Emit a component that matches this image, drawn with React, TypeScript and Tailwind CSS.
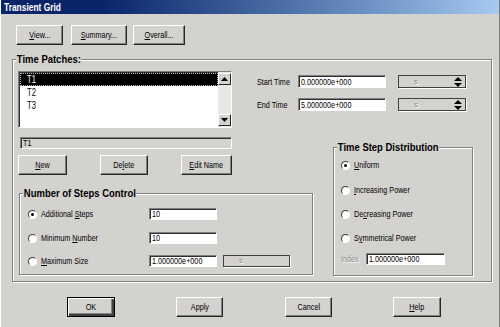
import React from 'react';

const BG = 'bg-[#d3d2cf]';

// the dialog's font is much narrower than Arial, so text is squeezed sideways
function Tx({ children, center = false, className = '' }: { children: React.ReactNode; center?: boolean; className?: string }) {
  return (
    <span
      className={`inline-block whitespace-nowrap scale-x-[0.76] ${center ? 'origin-center' : 'origin-left'} ${className}`}
    >
      {children}
    </span>
  );
}

function Btn({
  children,
  className = '',
  isDefault = false,
}: {
  children: React.ReactNode;
  className?: string;
  isDefault?: boolean;
}) {
  return (
    <div
      className={`flex h-[20px] shrink-0 items-center justify-center text-[9.5px] leading-none text-black ${
        isDefault
          ? 'border border-black shadow-[inset_1px_1px_0_#fff,inset_-2px_-2px_0_#404040,inset_-3px_-3px_0_#808080]'
          : 'border border-t-white border-l-white border-b-[#262626] border-r-[#262626] shadow-[inset_-1px_-1px_0_#808080]'
      } ${className}`}
    >
      <Tx center>{children}</Tx>
    </div>
  );
}

function Group({
  title,
  className = '',
  children,
}: {
  title: string;
  className?: string;
  children?: React.ReactNode;
}) {
  return (
    <div className={`relative border border-[#808080] shadow-[inset_1px_1px_0_#fff,1px_1px_0_#fff] ${className}`}>
      <span
        className={`absolute left-[3px] top-[-8px] origin-left scale-x-[0.86] whitespace-nowrap ${BG} px-px text-[11px] font-bold leading-[14px] text-black`}
      >
        {title}
      </span>
      {children}
    </div>
  );
}

function Field({ value, className = '', grey = false }: { value: string; className?: string; grey?: boolean }) {
  return (
    <div
      className={`flex shrink-0 items-center overflow-hidden border border-t-[#808080] border-l-[#808080] border-b-white border-r-white pl-[2px] text-[9.5px] leading-none text-black shadow-[inset_1px_1px_0_#303030] ${
        grey ? 'bg-[#d3d2cf]' : 'bg-white'
      } ${className}`}
    >
      <Tx>{value}</Tx>
    </div>
  );
}

function UnitSelect({ arrows = true, className = '' }: { arrows?: boolean; className?: string }) {
  return (
    <div className={`flex shrink-0 items-center border border-[#404040] bg-[#d3d2cf] shadow-[1px_1px_0_#fff] ${className}`}>
      <span className="ml-[15px] flex-1 text-[8px] leading-none text-[#8a8a8a] [text-shadow:1px_1px_0_#fff]">s</span>
      {arrows && (
        <svg width="8" height="10" viewBox="0 0 8 10" className="mr-[3px]">
          <polygon points="0,4 4,0 8,4" fill="#000" />
          <polygon points="0,6 4,10 8,6" fill="#000" />
        </svg>
      )}
    </div>
  );
}

function Radio({ checked = false }: { checked?: boolean }) {
  return (
    <span className="flex h-[9px] w-[9px] shrink-0 items-center justify-center rounded-full border-[1.5px] border-t-[#404040] border-l-[#404040] border-b-white border-r-white bg-white">
      {checked && <span className="h-[3px] w-[3px] rounded-full bg-black" />}
    </span>
  );
}

function RadioRow({
  checked,
  label,
  under,
  className = '',
}: {
  checked?: boolean;
  label: string;
  under: number;
  className?: string;
}) {
  return (
    <div className={`flex h-[12px] items-center ${className}`}>
      <Radio checked={checked} />
      <span className="ml-[4px] text-[9.5px] leading-none text-black">
        <Tx>
          {label.slice(0, under)}
          <u>{label[under]}</u>
          {label.slice(under + 1)}
        </Tx>
      </span>
    </div>
  );
}

export default function App() {
  return (
    <div
      className={`flex h-[327px] w-[500px] flex-col overflow-hidden border-l border-l-white border-r border-r-[#808080] ${BG} font-['Liberation_Sans',Arial,sans-serif]`}
    >
      {/* title bar */}
      <div className="flex h-[14px] shrink-0 items-center bg-gradient-to-r from-[#0a246a] from-[20%] to-[#a6caf0] pl-[3px]">
        <span className="origin-left scale-x-[0.8] whitespace-nowrap text-[10.5px] font-bold leading-none text-white">
          Transient Grid
        </span>
      </div>

      {/* top buttons */}
      <div className="mt-[11px] flex pl-[15px]">
        <Btn className="w-[47px]">
          <u>V</u>iew...
        </Btn>
        <Btn className="ml-[8px] w-[56px]">
          <u>S</u>ummary...
        </Btn>
        <Btn className="ml-[6px] w-[52px]">
          <u>O</u>verall...
        </Btn>
      </div>

      {/* time patches */}
      <Group title="Time Patches:" className="ml-[11px] mr-[7px] mt-[14px] h-[223px] shrink-0">
        <div className="flex flex-col pl-[5px] pt-[11px]">
          <div className="flex">
            <div className="flex w-[214px] flex-col">
              <div className="flex h-[57px] border border-t-[#808080] border-l-[#808080] border-b-white border-r-white bg-white shadow-[inset_1px_1px_0_#303030]">
                <div className="flex flex-1 flex-col pl-px pt-px text-[10px] leading-none">
                  <div className="flex h-[13px] items-center border border-dotted border-[#bbbbbb] bg-black pl-[6px] text-white">
                    <Tx>T1</Tx>
                  </div>
                  <div className="flex h-[13px] items-center pl-[7px] text-black">
                    <Tx>T2</Tx>
                  </div>
                  <div className="flex h-[13px] items-center pl-[7px] text-black">
                    <Tx>T3</Tx>
                  </div>
                </div>
                <div className="flex w-[13px] flex-col bg-[#e9e7e3] pt-px">
                  <div className="flex h-[12px] items-center justify-center border border-t-white border-l-white border-b-[#262626] border-r-[#262626] bg-[#d3d2cf]">
                    <svg width="7" height="4" viewBox="0 0 7 4">
                      <polygon points="0,4 3.5,0 7,4" fill="#000" />
                    </svg>
                  </div>
                  <div className="flex-1" />
                  <div className="mb-px flex h-[12px] items-center justify-center border border-t-white border-l-white border-b-[#262626] border-r-[#262626] bg-[#d3d2cf]">
                    <svg width="7" height="4" viewBox="0 0 7 4">
                      <polygon points="0,0 3.5,4 7,0" fill="#000" />
                    </svg>
                  </div>
                </div>
              </div>
              <Field value="T1" grey className="ml-[2px] mt-[9px] h-[12px] w-[212px]" />
            </div>

            <div className="ml-[25px] flex flex-col pt-[4px] text-[9.5px] leading-none text-black">
              <div className="flex h-[13px] items-center">
                <span className="w-[41px]">
                  <Tx>Start Time</Tx>
                </span>
                <Field value="0.000000e+000" className="h-[13px] w-[88px]" />
                <UnitSelect className="ml-[12px] h-[13px] w-[68px]" />
              </div>
              <div className="mt-[10px] flex h-[13px] items-center">
                <span className="w-[41px]">
                  <Tx>End Time</Tx>
                </span>
                <Field value="5.000000e+000" className="h-[13px] w-[88px]" />
                <UnitSelect className="ml-[12px] h-[13px] w-[68px]" />
              </div>
            </div>
          </div>

          <div className="flex">
            <div className="flex w-[295px] flex-col">
              <div className="mt-[6px] flex">
                <Btn className="w-[49px]">
                  <u>N</u>ew
                </Btn>
                <Btn className="ml-[33px] w-[48px]">
                  De<u>l</u>ete
                </Btn>
                <Btn className="ml-[33px] w-[51px]">
                  <u>E</u>dit Name
                </Btn>
              </div>
              <Group title="Number of Steps Control" className="ml-px mt-[18px] h-[82px] w-[294px]">
                <div className="flex flex-col pl-[8px] pt-[14px] text-[9.5px] leading-none">
                  <div className="flex h-[12px] items-center">
                    <div className="w-[121px]">
                      <RadioRow checked label="Additional Steps" under={11} />
                    </div>
                    <Field value="10" className="h-[12px] w-[68px]" />
                  </div>
                  <div className="mt-[12px] flex h-[12px] items-center">
                    <div className="w-[121px]">
                      <RadioRow label="Minimum Number" under={8} />
                    </div>
                    <Field value="10" className="h-[12px] w-[68px]" />
                  </div>
                  <div className="mt-[11px] flex h-[12px] items-center">
                    <div className="w-[121px]">
                      <RadioRow label="Maximum Size" under={0} />
                    </div>
                    <Field value="1.000000e+000" className="h-[12px] w-[68px]" />
                    <UnitSelect arrows={false} className="ml-[6px] h-[12px] w-[67px]" />
                  </div>
                </div>
              </Group>
            </div>

            <Group title="Time Step Distribution" className="ml-[20px] mt-[-2px] h-[129px] w-[140px]">
              <div className="flex flex-col pl-[7px] pt-[11px]">
                <RadioRow checked label="Uniform" under={0} />
                <RadioRow label="Increasing Power" under={0} className="mt-[13px]" />
                <RadioRow label="Decreasing Power" under={2} className="mt-[12px]" />
                <RadioRow label="Symmetrical Power" under={1} className="mt-[12px]" />
                <div className="mt-[9px] flex h-[12px] items-center">
                  <span className="w-[25px] text-[9.5px] leading-none text-[#8a8a8a] [text-shadow:1px_1px_0_#fff]">
                    <Tx>Index</Tx>
                  </span>
                  <Field value="1.000000e+000" className="h-[12px] w-[79px]" />
                </div>
              </div>
            </Group>
          </div>
        </div>
      </Group>

      {/* bottom buttons */}
      <div className="mt-[15px] flex pl-[66px]">
        <Btn isDefault className="w-[48px]">
          OK
        </Btn>
        <Btn className="ml-[61px] w-[47px]">Apply</Btn>
        <Btn className="ml-[62px] w-[47px]">Cancel</Btn>
        <Btn className="ml-[61px] w-[48px]">
          <u>H</u>elp
        </Btn>
      </div>
    </div>
  );
}
